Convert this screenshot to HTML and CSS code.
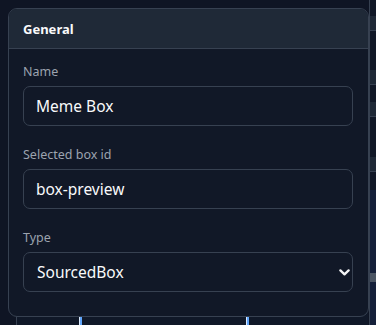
FILE: index.html
```html
<!DOCTYPE html>
<html>
  <head>
    <link rel="stylesheet" href="styles.css">
  </head>
  <body>
    <div class="backdrop">
      <div class="side-panel">
        <div class="side-row" style="top: 16px"></div>
        <div class="side-row" style="top: 70px"></div>
        <div class="side-row" style="top: 102px"></div>
        <div class="side-row" style="top: 157px"></div>
        <div class="side-blue"></div>
        <div class="side-bar"></div>
      </div>
      <div class="bottom-panel">
        <div class="marker" style="left: 62px"></div>
        <div class="marker" style="left: 229px"></div>
      </div>
    </div>

    <div class="card">
      <div class="card-header">General</div>
      <div class="card-body">
        <div class="field">
          <label class="field-label" for="name">Name</label>
          <input class="field-input" id="name" type="text" value="Meme Box">
        </div>
        <div class="field">
          <label class="field-label" for="boxid">Selected box id</label>
          <input class="field-input" id="boxid" type="text" value="box-preview">
        </div>
        <div class="field">
          <label class="field-label" for="type">Type</label>
          <div class="select-wrap">
            <select class="field-input field-select" id="type">
              <option>SourcedBox</option>
              <option>StaticBox</option>
            </select>
            <svg class="chevron" width="11" height="7" viewBox="0 0 11 7">
              <path d="M1.4 1.4 L5.5 5.3 L9.6 1.4" fill="none" stroke="#f3f4f6" stroke-width="2.3" stroke-linecap="round" stroke-linejoin="round"/>
            </svg>
          </div>
        </div>
      </div>
    </div>
  </body>
</html>
```

FILE: styles.css
```css
* {
  box-sizing: border-box;
}
:root {
  font-family: "Noto Sans", "Open Sans", sans-serif;
}
body {
  margin: 0;
  padding: 8px;
  background-color: #0f1524;
  overflow: hidden;
  height: 325px;
}

.backdrop .side-panel {
  position: absolute;
  left: 369px;
  top: 0;
  width: 20px;
  height: 325px;
  background-color: #111827;
  border-left: 1px solid #374151;
}
.side-row {
  position: absolute;
  left: 0;
  right: 0;
  height: 15px;
  background-color: #1f2937;
  border-bottom: 1px solid #374151;
}
.side-blue {
  position: absolute;
  left: 0;
  right: 0;
  top: 190px;
  height: 135px;
  background-color: #15203a;
}
.side-bar {
  position: absolute;
  left: 0;
  right: 0;
  top: 273px;
  height: 9px;
  background-color: #4b5563;
}
.backdrop .bottom-panel {
  position: absolute;
  left: 16px;
  top: 312px;
  width: 352px;
  height: 20px;
  background-color: #101828;
  border-left: 1px solid #374151;
}
.marker {
  position: absolute;
  top: 0;
  width: 3px;
  height: 20px;
  background-color: #60a5fa;
  border-left: 1px solid #dbeafe;
}

.card {
  position: relative;
  width: 361px;
  background-color: #111827;
  border: 1px solid #374151;
  border-radius: 9px;
  overflow: hidden;
}
.card-header {
  height: 40px;
  padding: 0 14px;
  display: flex;
  align-items: center;
  background-color: #1f2937;
  border-bottom: 1px solid #374151;
  color: #f9fafb;
  font-size: 13px;
  font-weight: 700;
}
.card-body {
  padding: 14px 14px 4px;
  display: flex;
  flex-direction: column;
  gap: 20px;
}
.field {
  display: flex;
  flex-direction: column;
  gap: 5px;
}
.field:last-child {
  margin-bottom: 20px;
}
.field-label {
  height: 18px;
  line-height: 18px;
  font-size: 12.5px;
  color: #9ca3af;
}
.field-input {
  width: 330px;
  height: 40px;
  padding: 0 12px;
  background-color: #111827;
  border: 1px solid #374151;
  border-radius: 7px;
  color: #f9fafb;
  font-family: inherit;
  font-size: 15.5px;
  outline: none;
}
.select-wrap {
  position: relative;
}
.field-select {
  appearance: none;
  padding-left: 13px;
}
.chevron {
  position: absolute;
  left: 316px;
  top: 17px;
  pointer-events: none;
}
```
